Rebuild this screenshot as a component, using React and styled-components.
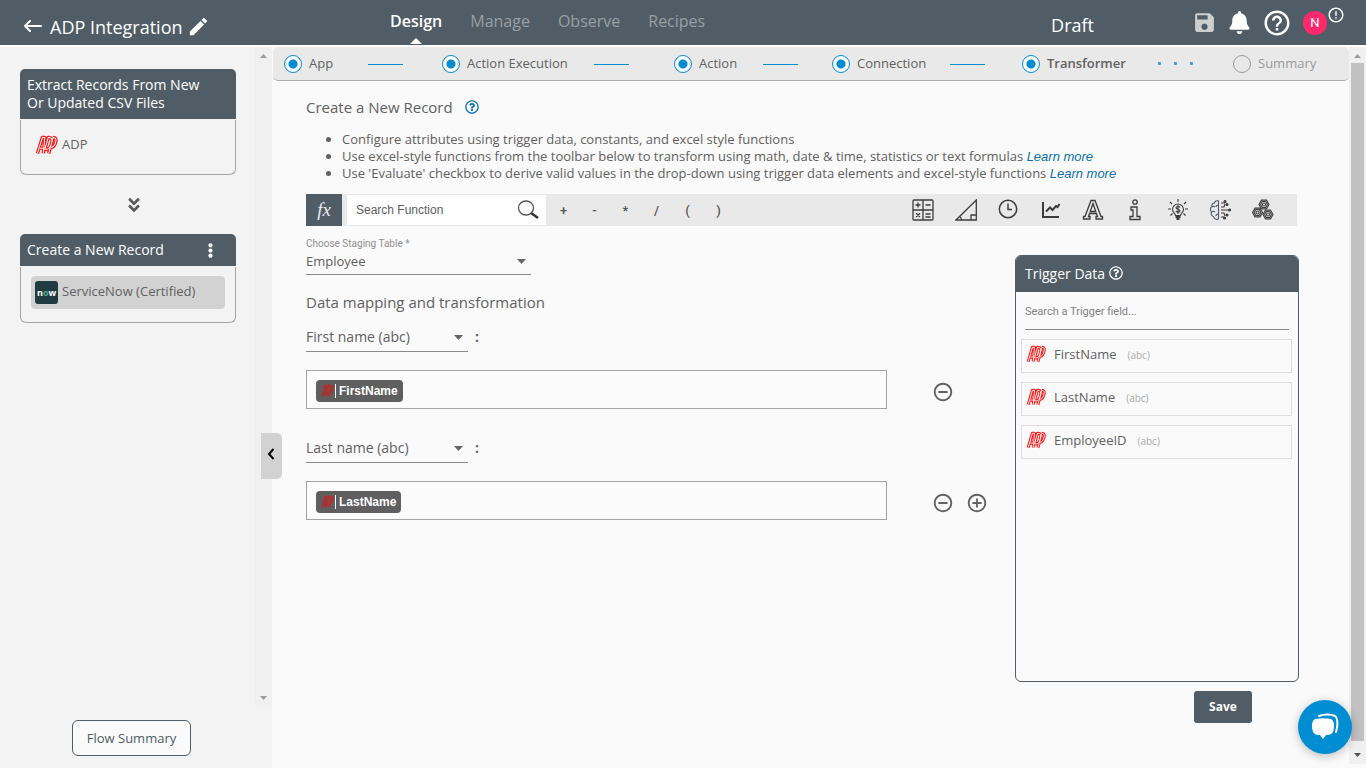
import React from 'react'
import styled, { createGlobalStyle, css } from 'styled-components'
import { FaAngleDoubleDown, FaBell, FaEllipsisV, FaRegQuestionCircle } from 'react-icons/fa'
import { MdAddCircleOutline, MdEdit, MdErrorOutline, MdHelpOutline, MdRemoveCircleOutline, MdSave } from 'react-icons/md'

const slate = '#505d66'
const blue = '#008dd1'
const text = '#616161'

const GlobalStyle = createGlobalStyle`
  *{
    box-sizing: border-box;
  }
  body{
    margin: 0;
    background: #fafafa;
    color: ${text};
    font-family: "Open Sans", "Noto Sans", sans-serif;
    font-size: 13px;
  }
  button, input, select{
    font-family: inherit;
    color: inherit;
  }
  button{
    border: none;
    background: none;
    padding: 0;
    cursor: pointer;
  }
  svg{
    display: block;
    flex: none;
  }
`

const Page = styled.div`
  min-height: 100vh;
  display: flex;
  flex-direction: column;
`

const Header = styled.header`
  height: 47px;
  display: grid;
  grid-template-columns: 390px 1fr auto;
  align-items: center;
  background: ${slate};
  border-bottom: 2px solid #fff;
  color: #fff;
`

const TitleGroup = styled.div`
  display: flex;
  align-items: center;
  gap: 8px;
  padding: 8px 0 0 24px;
`

const Title = styled.h1`
  margin: 0 -4px 0 0;
  font-size: 18px;
  line-height: 24px;
  font-weight: 400;
`

const IconButton = styled.button`
  display: flex;
  align-items: center;
  justify-content: center;
  color: ${({ $color }) => $color || 'inherit'};
`

const Tabs = styled.nav`
  align-self: stretch;
  display: flex;
  gap: 28px;
`

const Tab = styled.a`
  position: relative;
  padding-top: 10px;
  font-size: 16px;
  line-height: 22px;
  font-weight: ${({ $active }) => ($active ? 600 : 400)};
  color: ${({ $active }) => ($active ? '#fff' : '#9b9fa2')};
  text-decoration: none;
  ${({ $active }) => $active && css`
    &::after{
      content: '';
      position: absolute;
      left: 50%;
      bottom: 1px;
      margin-left: -6px;
      border: 6px solid transparent;
      border-top: none;
      border-bottom-color: #fff;
    }
  `}
`

const HeaderRight = styled.div`
  display: flex;
  align-items: center;
  padding-right: 21px;
`

const Status = styled.span`
  margin-right: 98px;
  padding-top: 4px;
  font-size: 18px;
  line-height: 24px;
`

const HeaderIcons = styled.div`
  display: flex;
  align-items: center;
  gap: 11px;
`

const Account = styled.div`
  display: flex;
  align-items: center;
  svg{
    margin-bottom: 16px;
  }
`

const Avatar = styled.button`
  width: 24px;
  height: 24px;
  border-radius: 50%;
  background: #ff2a6d;
  color: #fff;
  font-family: Roboto, sans-serif;
  font-size: 13px;
`

const Body = styled.div`
  flex: 1;
  display: flex;
`

const Sidebar = styled.aside`
  position: relative;
  width: 272px;
  flex: none;
  display: flex;
  flex-direction: column;
  background: #f3f3f3;
`

const FlowScroll = styled.div`
  flex: 1;
  display: flex;
`

const Flow = styled.div`
  flex: 1;
  display: flex;
  flex-direction: column;
  align-items: stretch;
  padding: 22px 19px 0 20px;
`

const Track = styled.div`
  width: 17px;
  flex: none;
  display: flex;
  flex-direction: column;
  align-items: center;
  justify-content: space-between;
  padding: 7px 0;
  background: #f0f0f0;
`

const Thumb = styled.div`
  flex: 1;
  width: 13px;
  margin: 5px 0 12px;
  background: #c1c1c1;
`

const FlowHead = styled.div`
  display: flex;
  align-items: center;
  justify-content: space-between;
  min-height: 32px;
  padding: 7px 18px 7px 7px;
  border-radius: 5px 5px 0 0;
  background: ${slate};
  color: #fff;
  font-size: 14px;
  line-height: 18px;
`

const FlowBody = styled.div`
  margin-top: 1px;
  padding: ${({ $tall }) => ($tall ? '9px 10px 12px' : '9px 10px 13px')};
  border: 1px solid #a2a6a9;
  border-top: none;
  border-radius: 0 0 6px 6px;
`

const FlowApp = styled.div`
  display: flex;
  align-items: center;
  gap: 4px;
  height: 33px;
  padding: 0 4px;
  border-radius: 4px;
  background: ${({ $active }) => ($active ? '#d2d2d2' : 'transparent')};
  font-weight: 500;
  font-size: 13px;
  line-height: 18px;
  span{
    padding-bottom: 3px;
  }
`

const FlowArrow = styled.div`
  display: flex;
  justify-content: center;
  padding: 21px 0 20px 12px;
  color: #5a5a5a;
`

const SidebarFoot = styled.div`
  display: flex;
  justify-content: center;
  padding: 13px 9px 12px 0;
`

const SummaryButton = styled.button`
  height: 36px;
  padding: 0 14px;
  border: 1px solid ${slate};
  border-radius: 6px;
  background: #fafafa;
  color: ${slate};
  font-size: 13px;
  font-weight: 500;
`

const Collapse = styled.button`
  position: absolute;
  z-index: 1;
  top: 386px;
  right: -10px;
  width: 21px;
  height: 46px;
  padding: 0 6px 4px;
  border-radius: 0 5px 5px 0;
  background: #d2d2d2;
  color: #000;
`

const Main = styled.main`
  flex: 1;
  min-width: 0;
  padding-left: 1px;
`

const Steps = styled.ol`
  display: grid;
  grid-template-columns: 158fr 232fr 158fr 190fr 211fr 116fr;
  margin: 0;
  padding: 0 0 0 11px;
  height: 34px;
  list-style: none;
  background: #e9e9e9;
  border-bottom: 1px solid #aaadb0;
  border-radius: 5px;
`

const Step = styled.li`
  display: flex;
  align-items: center;
  font-size: 13px;
  line-height: 18px;
  font-weight: ${({ $state }) => ($state === 'current' ? 600 : 400)};
  color: ${({ $state }) => ($state === 'todo' ? '#9a9a9a' : text)};
`

const StepLabel = styled.span`
  padding-bottom: 1px;
`

const StepMark = styled.span`
  width: 18px;
  height: 18px;
  flex: none;
  margin-right: 7px;
  border: 1px solid ${({ $todo }) => ($todo ? '#9a9a9a' : blue)};
  border-radius: 50%;
  ${({ $todo }) => !$todo && css`
    background: radial-gradient(circle, ${blue} 4px, #fff 5px);
  `}
`

const StepLine = styled.span`
  width: 35px;
  height: 1px;
  margin-top: 2px;
  margin-left: ${({ $gap }) => $gap}px;
  background-color: ${blue};
`

const StepDots = styled.span`
  display: flex;
  gap: 13px;
  margin-left: 32px;
  i{
    width: 3px;
    height: 3px;
    border-radius: 1px;
    background: #3a97d6;
  }
`

const Content = styled.div`
  padding: 16px 50px 0 33px;
`

const Heading = styled.h2`
  display: flex;
  align-items: center;
  gap: 12px;
  margin: 0;
  font-size: 15px;
  line-height: 20px;
  font-weight: 400;
`

const Hints = styled.ul`
  margin: 14px 0 12px;
  padding-left: 36px;
  font-size: 13px;
  line-height: 17px;
`

const LearnMore = styled.a`
  color: #0b70ab;
  font-family: "Liberation Sans", Arial, sans-serif;
  font-style: italic;
  text-decoration: none;
`

const Toolbar = styled.div`
  display: flex;
  align-items: center;
  height: 32px;
  margin-right: 2px;
  padding-right: 13px;
  background: #e9e9e9;
`

const FxButton = styled.button`
  width: 36px;
  height: 32px;
  background: ${slate};
  color: #e8ecee;
  font-family: "Liberation Serif", serif;
  font-style: italic;
  font-size: 19px;
`

const FunctionSearch = styled.label`
  display: flex;
  align-items: center;
  width: 199px;
  height: 30px;
  margin-left: 5px;
  padding: 0 7px 0 9px;
  background: #fff;
`

const SearchInput = styled.input`
  flex: 1;
  min-width: 0;
  width: 100%;
  padding: 0;
  border: none;
  outline: none;
  background: transparent;
  font-family: ${({ $small }) => ($small ? 'Roboto, sans-serif' : '"Liberation Sans", Arial, sans-serif')};
  font-size: ${({ $small }) => ($small ? 11 : 12)}px;
  &::placeholder{
    color: ${({ $small }) => ($small ? '#828282' : '#616161')};
    opacity: 1;
  }
`

const Operators = styled.div`
  display: grid;
  grid-template-columns: repeat(6, 31px);
  margin-left: 2px;
`

const Operator = styled.button`
  height: 30px;
  color: #555;
  font-family: Roboto, sans-serif;
  font-size: 13px;
  font-weight: 500;
`

const Functions = styled.div`
  display: grid;
  grid-template-columns: repeat(9, 1fr);
  width: 382px;
  margin-left: auto;
`

const Columns = styled.div`
  display: grid;
  grid-template-columns: minmax(0, 1fr) 284px;
`

const Mapping = styled.form`
  padding-top: 12px;
`

const FieldLabel = styled.label`
  display: block;
  margin-bottom: 2px;
  color: #8f8f8f;
  font-family: Roboto, sans-serif;
  font-size: 10px;
  line-height: 12px;
`

const SelectWrap = styled.div`
  position: relative;
  width: ${({ $wide }) => ($wide ? 225 : 162)}px;
  border-bottom: 1px solid #8a8a8a;
  svg{
    position: absolute;
    right: 5px;
    top: ${({ $wide }) => ($wide ? 7 : 9)}px;
    pointer-events: none;
  }
`

const Select = styled.select`
  display: block;
  width: 100%;
  height: ${({ $wide }) => ($wide ? 22 : 25)}px;
  padding: 0 20px 5px 0;
  border: none;
  outline: none;
  appearance: none;
  background: transparent;
  font-size: ${({ $wide }) => ($wide ? 13 : 14)}px;
`

const SectionTitle = styled.h3`
  margin: 17px 0 14px;
  font-size: 15px;
  line-height: 20px;
  font-weight: 400;
`

const Field = styled.div`
  margin-bottom: 28px;
`

const FieldName = styled.div`
  display: flex;
  gap: 7px;
  margin-bottom: 18px;
  font-size: 14px;
  line-height: 22px;
  font-weight: 700;
`

const FieldRow = styled.div`
  display: flex;
  align-items: center;
`

const ValueBox = styled.div`
  flex: 1;
  display: flex;
  align-items: center;
  height: 39px;
  padding: 2px 9px 0;
  border: 1px solid #a2a2a2;
  background: #fbfbfb;
`

const Chip = styled.span`
  display: flex;
  align-items: center;
  height: 22px;
  padding: 0 5px;
  border-radius: 4px;
  background: #5f5f5f;
  color: #fff;
  font-family: "Liberation Sans", Arial, sans-serif;
  font-size: 12px;
  font-weight: 700;
  span{
    margin-left: 1px;
    padding-left: 3px;
    border-left: 1px solid #fff;
    line-height: 14px;
  }
`

const RowActions = styled.div`
  display: flex;
  gap: 12px;
  width: 128px;
  padding: 4px 0 0 45px;
`

const Trigger = styled.section`
  padding-top: 29px;
`

const Panel = styled.div`
  min-height: 427px;
  border: 1px solid ${slate};
  border-radius: 6px;
  overflow: hidden;
`

const PanelHead = styled.h3`
  display: flex;
  align-items: center;
  gap: 4px;
  height: 36px;
  margin: 0;
  padding: 0 0 2px 9px;
  background: ${slate};
  color: #fff;
  font-size: 14px;
  font-weight: 400;
`

const TriggerSearch = styled.label`
  display: flex;
  height: 38px;
  margin: 0 9px 9px;
  padding-top: 2px;
  border-bottom: 1px solid #8a8a8a;
`

const TriggerList = styled.ul`
  display: flex;
  flex-direction: column;
  gap: 9px;
  margin: 0;
  padding: 0 6px 0 5px;
  list-style: none;
`

const TriggerItem = styled.li`
  display: flex;
  align-items: center;
  height: 34px;
  padding: 0 4px 3px;
  border: 1px solid #dedede;
  font-size: 13px;
  line-height: 18px;
  span{
    margin-left: 8px;
    padding-bottom: 2px;
  }
  small{
    margin-left: 11px;
    color: #aaa;
    font-size: 10px;
  }
`

const SaveButton = styled.button`
  display: block;
  width: 58px;
  height: 32px;
  margin: 9px 47px 0 auto;
  padding-bottom: 1px;
  border-radius: 3px;
  background: ${slate};
  color: #fff;
  font-size: 12px;
  font-weight: 700;
`

const PageTrack = styled(Track)`
  margin-bottom: 4px;
`

const ChatButton = styled.button`
  position: fixed;
  right: 14px;
  bottom: 14px;
  width: 54px;
  height: 54px;
  display: flex;
  align-items: center;
  justify-content: center;
  border-radius: 50%;
  background: ${blue};
  box-shadow: 0 2px 10px rgba(0, 0, 0, 0.25);
`

const adpStrokes = 'M5 36 15 5h5l-3 31M10 26h8M27 5l-7 23h4c6 0 8-5 10-12s0-11-5-11zM37 5l-9 31M37 5c6 0 7 4 5 10s-4 9-9 9'

const AdpLogo = ({ width = 23, height = 21, dim }) => (
  <svg width={width} height={height} viewBox="0 0 47 41" preserveAspectRatio="none" fill="none" strokeLinejoin="round" aria-hidden="true">
    <path d={adpStrokes} stroke={dim ? '#c62828' : '#fb1b1b'} strokeWidth="7" />
    <path d={adpStrokes} stroke={dim ? '#7d4444' : '#fff'} strokeWidth="2" />
  </svg>
)

const NowLogo = () => (
  <svg width="23" height="23" viewBox="0 0 23 23" aria-hidden="true">
    <rect width="23" height="23" rx="3" fill="#213c41" />
    <text x="2" y="15" fontSize="9" fontWeight="700" fontFamily="Open Sans, sans-serif" fill="#fff">
      n<tspan fill="#4fae8c">o</tspan>w
    </text>
  </svg>
)

const Caret = () => (
  <svg width="9" height="5" viewBox="0 0 9 5" aria-hidden="true">
    <path d="M0 0h9L4.500 5z" fill="#666" />
  </svg>
)

const ScrollArrow = ({ up, color = '#9c9c9c' }) => (
  <svg width="7" height="4" viewBox="0 0 7 4" aria-hidden="true">
    <path d={up ? 'M0 4h7L3.500 0z' : 'M0 0h7L3.500 4z'} fill={color} />
  </svg>
)

const Glyph = ({ children, width = 1.3, size = 22 }) => (
  <svg width={size} height={size} viewBox="0 0 22 22" fill="none" stroke="#3c3c3c" strokeWidth={width} aria-hidden="true">
    {children}
  </svg>
)

const hexagon = (x, y, r) => {
  const h = r * 0.87
  return `M${x - r / 2} ${y - h}H${x + r / 2}L${x + r} ${y} ${x + r / 2} ${y + h}H${x - r / 2}L${x - r} ${y}z`
}

const functionGroups = [
  { name: 'Math', icon: <Glyph><rect x="1" y="1" width="20" height="20" rx="1" /><path d="M11 1v20M1 11h20M3.500 6h5M6 3.500v5M13.500 6h5M4.200 14.200l3.800 3.800M8 14.200 4.200 18M13.500 15h5M13.500 18h5" /></Glyph> },
  { name: 'Trigonometry', icon: <Glyph><path d="M1 21 21.300 1v20zM4.500 17.500c1.500.8 2 2 2 3.500M16 21v-5h5" /></Glyph> },
  { name: 'Date and time', icon: <Glyph width={1.5}><circle cx="11" cy="10" r="8.700" /><path d="M11 4.500v6h4" /></Glyph> },
  { name: 'Statistics', icon: <Glyph width={2}><path d="M3 3v15h16M6 12.500l4-4 2.500 2.500L16 7l1.500 1 2-3" /></Glyph> },
  { name: 'Text', icon: <Glyph><path d="M9 1.500h4l6 16h1.500v2.500H14v-2.500h1.500l-1-3h-7l-1 3H8v2.500H1.500v-2.500H3zM11 4.500l-2.800 8h5.600z" /></Glyph> },
  { name: 'Information', icon: <Glyph><circle cx="11" cy="3" r="2.200" /><path d="M7 8h6v9.500h3v3H6v-3h3V11H7z" /></Glyph> },
  { name: 'Finance', icon: <Glyph width={1.1}><path d="M11 0v3M3 3l2 2M19 3l-2 2M1 10h3M18 10h3M3.500 16.500l2-2M18.500 16.500l-2-2M8.500 16.500c0-2-3-3-3-6a5.500 5.500 0 0 1 11 0c0 3-3 4-3 6z" /><path d="M13 8.500c-.5-1.200-4-1.500-4 .3s4 1.200 4 3-3.500 1.700-4.200.2M11 6v9" /><path d="M8.500 18h5M9.500 20h3" strokeWidth="2" /></Glyph> },
  { name: 'Machine learning', icon: <Glyph width={1.1}><path d="M9.500 2C7 1 5.500 3 5.500 4 3 4 2.500 6 3 7.500c-2 1-2 4-.5 5.500-1 2 0 4 2 4.500.5 2.500 3 3.500 5 2.500zM9 6c-1.500 0-2 1-2 2M3 8c1-1 2.500-.5 3 0M3 13c1-1 2-1 3 0M9 15c-2 0-2 1.500-2 2" stroke="#4a5a6c" /><path d="M12 8h3l1-3M12 11h7M12 14h3l1 3M12 4h4M12 18h3" /><g fill="#3c3c3c"><circle cx="16" cy="2.500" r="1" /><circle cx="18" cy="5.500" r="1" /><circle cx="20.500" cy="11" r="1" /><circle cx="18" cy="16" r="1" /><circle cx="15.500" cy="19" r="1" /></g></Glyph> },
  {
    name: 'Advanced',
    icon: (
      <Glyph width={1.1}>
        {[[12, 5.5], [5.5, 13.5], [16, 15.5]].map(([x, y]) => (
          <g key={y}>
            <path d={hexagon(x, y, 5)} />
            <path d={hexagon(x, y, 3.4)} />
            <circle cx={x} cy={y} r="1.500" />
          </g>
        ))}
      </Glyph>
    )
  }
]

const steps = [
  { label: 'App', state: 'done', gap: 35 },
  { label: 'Action Execution', state: 'done', gap: 26 },
  { label: 'Action', state: 'done', gap: 26 },
  { label: 'Connection', state: 'done', gap: 24 },
  { label: 'Transformer', state: 'current' },
  { label: 'Summary', state: 'todo' }
]

const mappings = [
  { id: 'first', label: 'First name (abc)', value: 'FirstName' },
  { id: 'last', label: 'Last name (abc)', value: 'LastName' }
]

const triggerFields = ['FirstName', 'LastName', 'EmployeeID']

const TopBar = () => (
  <Header>
    <TitleGroup>
      <IconButton aria-label="Back">
        <svg width="18" height="16" viewBox="0 0 18 16" fill="none" stroke="#fff" strokeWidth="2" strokeLinecap="round" strokeLinejoin="round">
          <path d="M17 7H1M6 2 1 7l5 5" />
        </svg>
      </IconButton>
      <Title>ADP Integration</Title>
      <IconButton aria-label="Rename"><MdEdit size={23} /></IconButton>
    </TitleGroup>
    <Tabs>
      <Tab href="#design" $active>Design</Tab>
      <Tab href="#manage">Manage</Tab>
      <Tab href="#observe">Observe</Tab>
      <Tab href="#recipes">Recipes</Tab>
    </Tabs>
    <HeaderRight>
      <Status>Draft</Status>
      <HeaderIcons>
        <IconButton aria-label="Save flow" $color="#cfcfcf"><MdSave size={25} /></IconButton>
        <IconButton aria-label="Notifications"><FaBell size={23} /></IconButton>
        <IconButton aria-label="Help"><MdHelpOutline size={30} /></IconButton>
        <Account>
          <Avatar aria-label="Account">N</Avatar>
          <MdErrorOutline size={18} />
        </Account>
      </HeaderIcons>
    </HeaderRight>
  </Header>
)

const FlowSidebar = () => (
  <Sidebar>
    <FlowScroll>
      <Flow>
        <FlowHead>Extract Records From New<br />Or Updated CSV Files</FlowHead>
        <FlowBody $tall>
          <FlowApp><AdpLogo /><span>ADP</span></FlowApp>
        </FlowBody>
        <FlowArrow><FaAngleDoubleDown size={18} /></FlowArrow>
        <FlowHead>
          Create a New Record
          <IconButton aria-label="Step options"><FaEllipsisV size={15} /></IconButton>
        </FlowHead>
        <FlowBody>
          <FlowApp $active><NowLogo /><span>ServiceNow (Certified)</span></FlowApp>
        </FlowBody>
      </Flow>
      <Track><ScrollArrow up /><ScrollArrow /></Track>
    </FlowScroll>
    <SidebarFoot>
      <SummaryButton>Flow Summary</SummaryButton>
    </SidebarFoot>
    <Collapse aria-label="Collapse sidebar">
      <svg width="8" height="12" viewBox="0 0 8 12" fill="none" stroke="#000" strokeWidth="2">
        <path d="M6.500 1 2 6l4.500 5" />
      </svg>
    </Collapse>
  </Sidebar>
)

const StepBar = () => (
  <Steps>
    {steps.map(({ label, state, gap }) => (
      <Step key={label} $state={state}>
        <StepMark $todo={state === 'todo'} />
        <StepLabel>{label}</StepLabel>
        {gap && <StepLine $gap={gap} />}
        {state === 'current' && <StepDots><i /><i /><i /></StepDots>}
      </Step>
    ))}
  </Steps>
)

const FunctionBar = () => (
  <Toolbar>
    <FxButton aria-label="Functions">fx</FxButton>
    <FunctionSearch>
      <SearchInput placeholder="Search Function" aria-label="Search Function" />
      <svg width="22" height="20" viewBox="0 0 22 20" fill="none" aria-hidden="true">
        <ellipse cx="9" cy="8" rx="7.500" ry="7" stroke="#555" strokeWidth="1.300" />
        <path d="m14 13 7 5" stroke="#333" strokeWidth="2.500" />
      </svg>
    </FunctionSearch>
    <Operators>
      {['+', '-', '*', '/', '(', ')'].map((op) => <Operator key={op}>{op}</Operator>)}
    </Operators>
    <Functions>
      {functionGroups.map(({ name, icon }) => (
        <IconButton key={name} aria-label={name}>{icon}</IconButton>
      ))}
    </Functions>
  </Toolbar>
)

const MappingField = ({ field, last }) => (
  <Field>
    <FieldName>
      <SelectWrap>
        <Select defaultValue={field.label} aria-label={`${field.value} target field`}>
          <option>{field.label}</option>
        </Select>
        <Caret />
      </SelectWrap>
      :
    </FieldName>
    <FieldRow>
      <ValueBox>
        <Chip><AdpLogo width={13} height={14} dim /><span>{field.value}</span></Chip>
      </ValueBox>
      <RowActions>
        <IconButton type="button" aria-label="Remove field"><MdRemoveCircleOutline size={22} /></IconButton>
        {last && <IconButton type="button" aria-label="Add field"><MdAddCircleOutline size={22} /></IconButton>}
      </RowActions>
    </FieldRow>
  </Field>
)

const TriggerPanel = () => (
  <Trigger>
    <Panel>
      <PanelHead>Trigger Data <FaRegQuestionCircle size={14} /></PanelHead>
      <TriggerSearch>
        <SearchInput $small placeholder="Search a Trigger field..." aria-label="Search a Trigger field" />
      </TriggerSearch>
      <TriggerList>
        {triggerFields.map((name) => (
          <TriggerItem key={name}>
            <AdpLogo width={20} height={19} />
            <span>{name}</span>
            <small>(abc)</small>
          </TriggerItem>
        ))}
      </TriggerList>
    </Panel>
    <SaveButton>Save</SaveButton>
  </Trigger>
)

const App = () => {
  return (
    <>
      <GlobalStyle />
      <Page>
        <TopBar />
        <Body>
          <FlowSidebar />
          <Main>
            <StepBar />
            <Content>
              <Heading>Create a New Record <FaRegQuestionCircle size={14} color="#0b70ab" /></Heading>
              <Hints>
                <li>Configure attributes using trigger data, constants, and excel style functions</li>
                <li>Use excel-style functions from the toolbar below to transform using math, date &amp; time, statistics or text formulas <LearnMore href="#functions">Learn more</LearnMore></li>
                <li>Use 'Evaluate' checkbox to derive valid values in the drop-down using trigger data elements and excel-style functions <LearnMore href="#evaluate">Learn more</LearnMore></li>
              </Hints>
              <FunctionBar />
              <Columns>
                <Mapping>
                  <FieldLabel htmlFor="table">Choose Staging Table *</FieldLabel>
                  <SelectWrap $wide>
                    <Select $wide id="table" defaultValue="Employee">
                      <option>Employee</option>
                    </Select>
                    <Caret />
                  </SelectWrap>
                  <SectionTitle>Data mapping and transformation</SectionTitle>
                  {mappings.map((field, i) => (
                    <MappingField key={field.id} field={field} last={i === mappings.length - 1} />
                  ))}
                </Mapping>
                <TriggerPanel />
              </Columns>
            </Content>
          </Main>
          <PageTrack>
            <ScrollArrow up />
            <Thumb />
            <ScrollArrow color="#505050" />
          </PageTrack>
        </Body>
        <ChatButton aria-label="Open chat">
          <svg width="28" height="28" viewBox="0 0 28 28">
            <path d="M8 3c5-2 12-2 16 0 3 2 3 10 1 16" fill="none" stroke="#fff" strokeWidth="2" strokeLinecap="round" />
            <path d="M4 6c5-1 11-1 16 0 2 1 3 3 3 7s-1 7-3 8c-2 1-3 1-5 1l-3 4-3-4c-2 0-4 0-5-1-2-1-3-4-3-8s1-6 3-7z" fill="#fff" />
          </svg>
        </ChatButton>
      </Page>
    </>
  )
}

export default App
